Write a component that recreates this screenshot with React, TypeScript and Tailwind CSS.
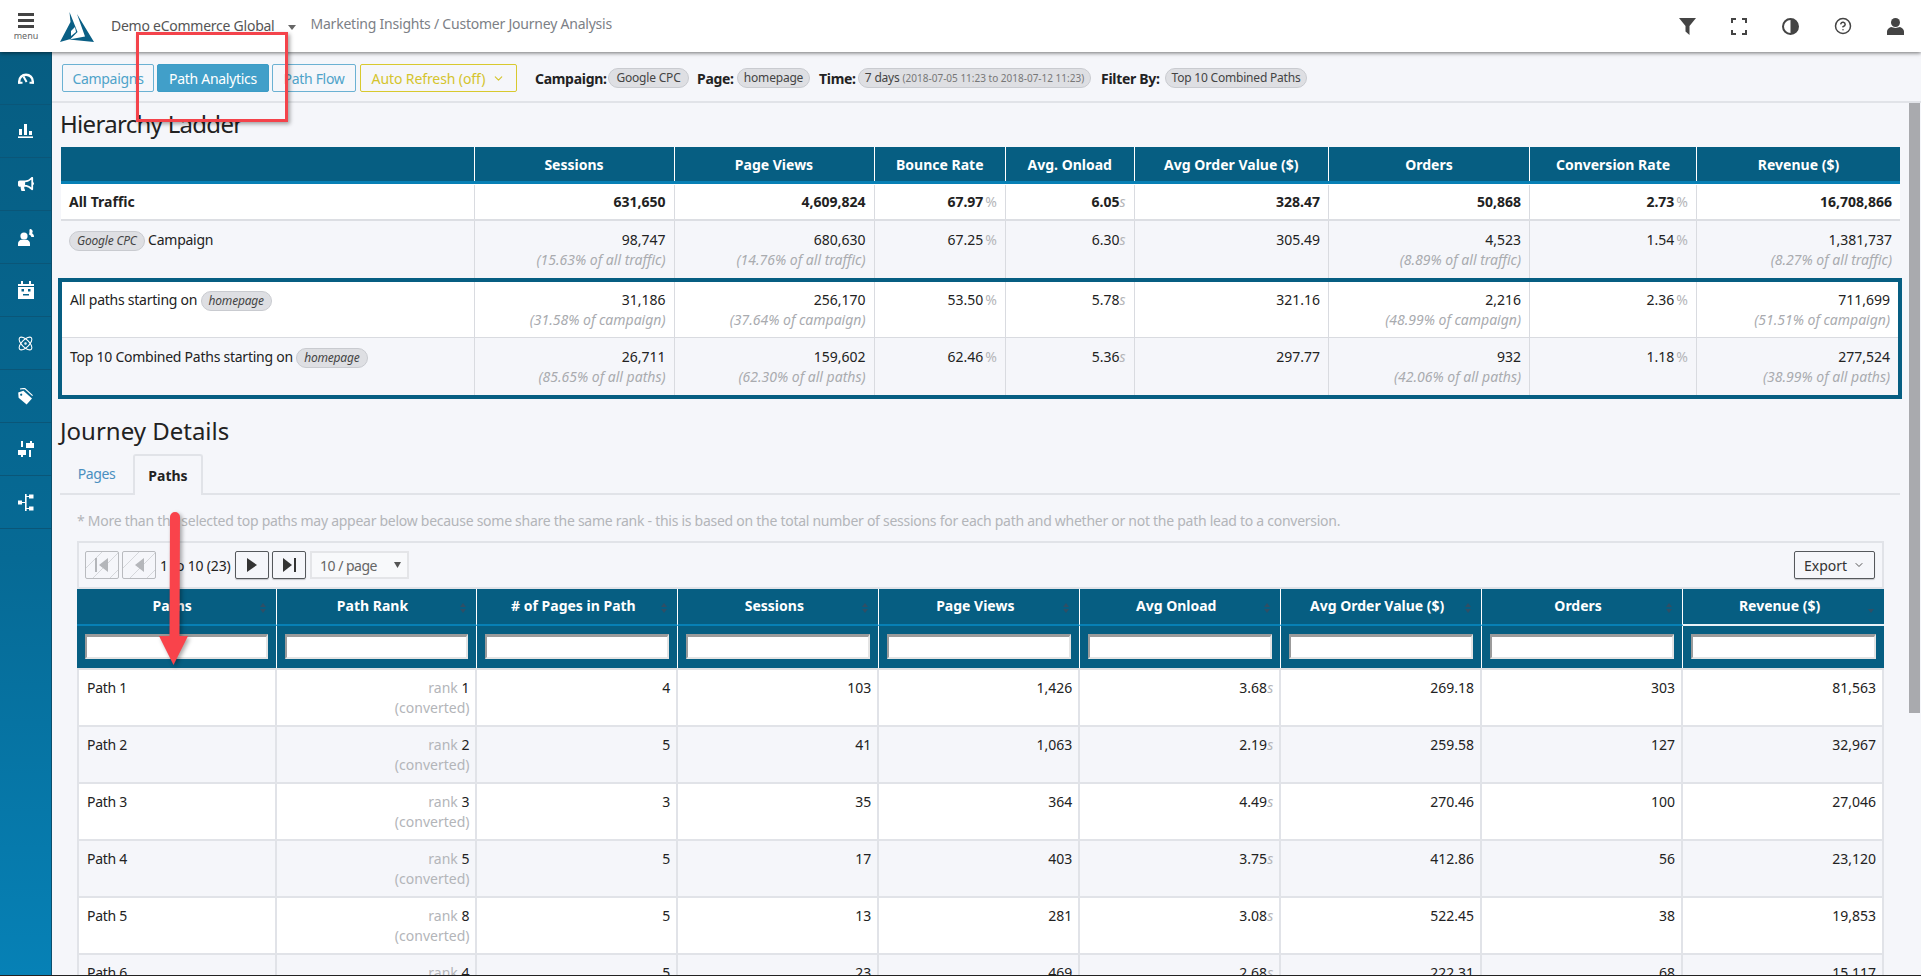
import React from 'react';
import { Atom, CircleHelp, ChevronDown } from 'lucide-react';
import { FaBullhorn } from 'react-icons/fa';

const ladderCols = 'grid grid-cols-[413.5px_200px_200px_131.5px_128.5px_194.5px_201px_167px_203px]';
const boxCols = 'grid grid-cols-[412.5px_200px_200px_131.5px_128.5px_194.5px_201px_167px_201px]';

const ladderHead = ['', 'Sessions', 'Page Views', 'Bounce Rate', 'Avg. Onload', 'Avg Order Value ($)', 'Orders', 'Conversion Rate', 'Revenue ($)'];

type Cell = { v: string; sub?: string; unit?: string };

const googleRow: Cell[] = [
  { v: '98,747', sub: '(15.63% of all traffic)' },
  { v: '680,630', sub: '(14.76% of all traffic)' },
  { v: '67.25', unit: '%' },
  { v: '6.30', unit: 's' },
  { v: '305.49' },
  { v: '4,523', sub: '(8.89% of all traffic)' },
  { v: '1.54', unit: '%' },
  { v: '1,381,737', sub: '(8.27% of all traffic)' },
];
const allRow: Cell[] = [
  { v: '631,650' },
  { v: '4,609,824' },
  { v: '67.97', unit: '%' },
  { v: '6.05', unit: 's' },
  { v: '328.47' },
  { v: '50,868' },
  { v: '2.73', unit: '%' },
  { v: '16,708,866' },
];
const pathsRow: Cell[] = [
  { v: '31,186', sub: '(31.58% of campaign)' },
  { v: '256,170', sub: '(37.64% of campaign)' },
  { v: '53.50', unit: '%' },
  { v: '5.78', unit: 's' },
  { v: '321.16' },
  { v: '2,216', sub: '(48.99% of campaign)' },
  { v: '2.36', unit: '%' },
  { v: '711,699', sub: '(51.51% of campaign)' },
];
const topRow: Cell[] = [
  { v: '26,711', sub: '(85.65% of all paths)' },
  { v: '159,602', sub: '(62.30% of all paths)' },
  { v: '62.46', unit: '%' },
  { v: '5.36', unit: 's' },
  { v: '297.77' },
  { v: '932', sub: '(42.06% of all paths)' },
  { v: '1.18', unit: '%' },
  { v: '277,524', sub: '(38.99% of all paths)' },
];

const gridHead = ['Paths', 'Path Rank', '# of Pages in Path', 'Sessions', 'Page Views', 'Avg Onload', 'Avg Order Value ($)', 'Orders', 'Revenue ($)'];
const pathRows = [
  ['Path 1', '1', '4', '103', '1,426', '3.68', '269.18', '303', '81,563'],
  ['Path 2', '2', '5', '41', '1,063', '2.19', '259.58', '127', '32,967'],
  ['Path 3', '3', '3', '35', '364', '4.49', '270.46', '100', '27,046'],
  ['Path 4', '5', '5', '17', '403', '3.75', '412.86', '56', '23,120'],
  ['Path 5', '8', '5', '13', '281', '3.08', '522.45', '38', '19,853'],
  ['Path 6', '4', '5', '23', '469', '2.68', '222.31', '68', '15,117'],
];

const Pill = ({ children, italic, className = '' }: { children: React.ReactNode; italic?: boolean; className?: string }) => (
  <span className={`inline-flex h-[20px] items-center justify-center whitespace-nowrap rounded-full border border-[#c9cbd0] bg-[#dedfe3] px-[7px] text-[12px] leading-none tracking-[-0.2px] text-[#444] ${italic ? 'italic' : ''} ${className}`}>
    {children}
  </span>
);

const GaugeIcon = () => (
  <svg width="16" height="12" viewBox="0 0 16 12" fill="none">
    <path d="M1.2 11.5V9.5a6.8 6.8 0 0 1 13.6 0v2" stroke="#fff" strokeWidth="2.4" />
    <path d="M0 10.8h4.5M11.5 10.8H16" stroke="#fff" strokeWidth="2" />
    <path d="M5.5 4.5 8.6 10" stroke="#fff" strokeWidth="2" />
  </svg>
);
const BarsIcon = () => (
  <svg width="15" height="14" viewBox="0 0 15 14" fill="#fff">
    <rect x="1" y="5" width="3" height="6" />
    <rect x="6" y="0" width="3" height="11" />
    <rect x="11" y="7" width="3" height="4" />
    <rect x="0" y="12.4" width="15" height="1.6" />
  </svg>
);
const UsersIcon = () => (
  <svg width="16" height="17" viewBox="0 0 16 17" fill="#fff">
    <circle cx="6" cy="7" r="3.6" />
    <path d="M0 17v-2.6c0-2 1.8-3.4 3.6-3.6h4.8c1.8.2 3.6 1.6 3.6 3.6V17z" />
    <path d="M12 0a2.5 2.5 0 0 1 2 4.2c1 .5 2 1.5 2 3.8h-2.6c-.5-1.4-1.4-2-2.6-2.4.6-.8.8-3 .6-4.6z" />
  </svg>
);
const CalendarIcon = () => (
  <svg width="16" height="18" viewBox="0 0 16 18" fill="#fff">
    <rect x="3" y="0" width="2" height="3" />
    <rect x="11" y="0" width="2" height="3" />
    <path fillRule="evenodd" d="M0 3h16v15H0zM3.5 8v2.5H6V8zM10 8v2.5h2.5V8zM5 13v1.5h6V13z" />
    <rect x="0" y="5" width="16" height="1" fill="#065f84" />
  </svg>
);
const TagIcon = () => (
  <svg width="15" height="17" viewBox="0 0 15 17" fill="none">
    <path fillRule="evenodd" d="M0.2 4.6 5.4 2.8 14 10.4 8.6 16.6 0.6 9.8zM3.2 5.6a1.1 1.1 0 1 0 .01 0z" fill="#fff" />
    <path d="M2 1 6.6 0.4 14.6 7.6" stroke="#fff" strokeWidth="1.2" />
  </svg>
);
const SlidersIcon = () => (
  <svg width="16" height="16" viewBox="0 0 16 16" fill="#fff">
    <rect x="3" y="0" width="2" height="6" />
    <rect x="12" y="0" width="2" height="2" />
    <rect x="8" y="2" width="8" height="5" />
    <rect x="0" y="9" width="8" height="5" />
    <rect x="3" y="14" width="2" height="2" />
    <rect x="11" y="9" width="2" height="7" />
  </svg>
);
const TreeIcon = () => (
  <svg width="16" height="17" viewBox="0 0 16 17" fill="#fff">
    <rect x="0" y="6.5" width="4" height="4" />
    <rect x="4" y="8" width="3" height="1" />
    <rect x="7" y="0" width="1.6" height="17" />
    <rect x="8" y="2" width="3" height="1" />
    <rect x="8" y="14" width="3" height="1" />
    <rect x="11" y="0.5" width="4.5" height="4" />
    <rect x="11" y="12.5" width="4.5" height="4" />
  </svg>
);

const sideIcons = [
  <GaugeIcon />,
  <BarsIcon />,
  <FaBullhorn size={16} color="#fff" />,
  <UsersIcon />,
  <CalendarIcon />,
  <Atom size={17} color="#fff" strokeWidth={1.5} />,
  <TagIcon />,
  <SlidersIcon />,
  <TreeIcon />,
];

const Value = ({ cell, bold }: { cell: Cell; bold?: boolean }) => (
  <>
    <div className={`leading-[20px] ${bold ? 'font-bold' : ''}`}>
      {cell.v}
      {cell.unit === '%' && <span className="ml-[2px] font-normal text-[#b4b5b8]">%</span>}
      {cell.unit === 's' && <span className="font-normal italic text-[#b4b5b8]">s</span>}
    </div>
    {cell.sub && <div className="whitespace-nowrap italic leading-[20px] text-[#a9abaf]">{cell.sub}</div>}
  </>
);

const LadderRow = ({ label, cells, cols, bold, className }: { label: React.ReactNode; cells: Cell[]; cols: string; bold?: boolean; className: string }) => (
  <div className={`${cols} ${className}`}>
    <div className={`border-r border-[#d9dbe0] px-[8px] leading-[20px] ${bold ? 'font-bold' : 'tracking-[-0.25px]'}`}>{label}</div>
    {cells.map((c, i) => (
      <div key={i} className={`px-[8px] text-right ${i < cells.length - 1 ? 'border-r border-[#d9dbe0]' : ''}`}>
        <Value cell={c} bold={bold} />
      </div>
    ))}
  </div>
);

const PageButton = ({ children, disabled }: { children: React.ReactNode; disabled?: boolean }) => (
  <div className={`flex h-[28px] w-[34px] items-center justify-center rounded-[2px] border ${disabled ? 'border-[#b9bbbf] bg-[repeating-linear-gradient(135deg,transparent_0,transparent_11px,#d5d7db_11px,#d5d7db_12px)]' : 'border-[#55585c] shadow-[0_1px_1px_rgba(0,0,0,.2)]'}`}>
    {children}
  </div>
);

const SortIcon = ({ downOnly }: { downOnly?: boolean }) => (
  <svg width="8" height="12" viewBox="0 0 8 12" fill="#2f4f66" className="absolute right-[9px] top-[13px]">
    {!downOnly && <path d="M4 1 7 5H1z" />}
    <path d="M4 11 7 7H1z" />
  </svg>
);

export default function App() {
  return (
    <div className="relative flex h-[976px] w-[1921px] flex-col overflow-hidden border-b border-[#222] bg-[#f5f6fa] font-['Noto_Sans',sans-serif] text-[14px] text-[#222]">
      <header className="relative z-10 flex h-[52px] shrink-0 items-center bg-white shadow-[0_1px_4px_rgba(0,0,0,.55)]">
        <div className="flex w-[52px] flex-col items-center pt-[2px]">
          <div className="flex w-[16px] flex-col gap-[3px]">
            <div className="h-[3px] bg-[#444]" />
            <div className="h-[3px] bg-[#444]" />
            <div className="h-[3px] bg-[#444]" />
          </div>
          <span className="mt-[2px] text-[9px] leading-[12px] text-[#666]">menu</span>
        </div>
        <svg width="34" height="30" viewBox="0 0 34 30" className="ml-[8px] mt-[2px]" fill="#0a5f85">
          <path d="M17 2 34 30 9 27.5 25 24.5z" />
          <path d="M9.500 0 17.500 20 10.500 27 0 30 10.500 10z" />
          <path d="M11 19 15 15 16 20 11 24z" fill="#fff" />
        </svg>
        <span className="ml-[17px] mt-[-1px] tracking-[-0.25px] text-[#555]">Demo eCommerce Global</span>
        <svg width="8" height="5" viewBox="0 0 8 5" className="ml-[14px] mt-[3px]" fill="#666">
          <path d="M0 0h8L4 5z" />
        </svg>
        <span className="ml-[14px] mt-[-6px] tracking-[-0.22px] text-[#7c7f86]">Marketing Insights / Customer Journey Analysis</span>
        <div className="ml-auto flex w-[260px] items-center justify-between pr-[17px] pl-[18px] text-[#444]">
          <svg width="17" height="17" viewBox="0 0 17 17" fill="#444"><path d="M0 0h17L10.500 8v9L6.500 13.500V8z" /></svg>
          <svg width="16" height="17" viewBox="0 0 16 17" fill="none" stroke="#444" strokeWidth="2"><path d="M1 5V1h4M11 1h4v4M15 12v4h-4M5 16H1v-4" /></svg>
          <svg width="17" height="17" viewBox="0 0 17 17"><circle cx="8.500" cy="8.500" r="7.500" fill="#fff" stroke="#444" strokeWidth="2" /><path d="M8.500 1a7.500 7.500 0 0 1 0 15z" fill="#444" /></svg>
          <CircleHelp size={18} color="#444" strokeWidth={2} />
          <svg width="17" height="17" viewBox="0 0 17 17" fill="#444"><circle cx="8.500" cy="4.500" r="4.500" /><path d="M0 17v-3.500c0-2 2-4 4-4.500l4.500 1 4.500-1c2 .5 4 2.500 4 4.500V17z" /></svg>
        </div>
      </header>

      <div className="flex min-h-0 flex-1">
        <aside className="w-[52px] shrink-0 border-r border-[#0b4f6d] bg-[linear-gradient(180deg,#065d82_0%,#066a95_55%,#0681b6_100%)]">
          {sideIcons.map((icon, i) => (
            <div key={i} className="flex h-[53px] items-center justify-center border-b border-[#0a5678]">
              {icon}
            </div>
          ))}
        </aside>

        <main className="flex min-w-0 flex-1 flex-col">
          <div className="flex h-[51px] shrink-0 items-center border-b-2 border-[#e1e3e8] pl-[10px] pt-[3px] tracking-[-0.3px]">
            <div className="flex h-[28px] w-[92px] items-center justify-center rounded-[2px] border border-[#6bb1d3] text-[#4fa3c9]">Campaigns</div>
            <div className="ml-[3px] flex h-[28px] w-[112px] items-center justify-center rounded-[2px] border border-[#3c9cc6] bg-[#419fc9] text-white">Path Analytics</div>
            <div className="ml-[3px] flex h-[28px] w-[84px] items-center justify-center rounded-[2px] border border-[#6bb1d3] text-[#4fa3c9]">Path Flow</div>
            <div className="ml-[4px] flex h-[28px] w-[157px] items-center justify-center gap-[7px] rounded-[2px] border border-[#d8c92e] tracking-[-0.1px] text-[#d4c42c]">
              Auto Refresh (off)
              <ChevronDown size={13} color="#d4c42c" />
            </div>
            <b className="ml-[18px] w-[73px] whitespace-nowrap text-[#222]">Campaign:</b>
            <Pill className="w-[81px]">Google CPC</Pill>
            <b className="ml-[8px] w-[40px]">Page:</b>
            <Pill className="w-[73px]">homepage</Pill>
            <b className="ml-[9px] w-[39px]">Time:</b>
            <Pill className="w-[233px]">
              7 days<span className="ml-[3px] text-[10px] tracking-[0px] text-[#777]">(2018-07-05 11:23 to 2018-07-12 11:23)</span>
            </Pill>
            <b className="ml-[10px] w-[64px] whitespace-nowrap">Filter By:</b>
            <Pill className="w-[142px]">Top 10 Combined Paths</Pill>
          </div>

          <div className="flex min-h-0 flex-1">
            <div className="min-w-0 flex-1 pl-[8px]">
              <h2 className="mt-[-1px] flex h-[44px] items-center text-[24px] leading-none tracking-[-0.7px]">Hierarchy Ladder</h2>

              <div className="ml-px mt-px w-[1839px]">
                <div className={`${ladderCols} h-[37px] border-b-[3px] border-[#0780b5] bg-[#065e82] font-bold text-white`}>
                  {ladderHead.map((h, i) => (
                    <div key={i} className={`flex items-center justify-center ${i < 8 ? 'border-r border-white' : ''}`}>{h}</div>
                  ))}
                </div>
                <LadderRow label="All Traffic" cells={allRow} cols={ladderCols} bold className="h-[37px] items-stretch border-b-2 border-[#dcdee3] bg-white pt-[1px] [&>div]:flex [&>div]:items-center [&>div]:justify-end [&>div:first-child]:justify-start" />
                <LadderRow
                  label={<><Pill italic>Google CPC</Pill> Campaign</>}
                  cells={googleRow}
                  cols={ladderCols}
                  className="h-[57px] [&>div]:pt-[9px]"
                />
                <div className="-ml-[3px] -mr-[2px] border-[4px] border-[#065e82]">
                  <LadderRow
                    label={<>All paths starting on <Pill italic>homepage</Pill></>}
                    cells={pathsRow}
                    cols={boxCols}
                    className="h-[56px] border-b border-[#d9dbe0] bg-white [&>div]:pt-[8px]"
                  />
                  <LadderRow
                    label={<>Top 10 Combined Paths starting on <Pill italic>homepage</Pill></>}
                    cells={topRow}
                    cols={boxCols}
                    className="h-[57px] [&>div]:pt-[9px]"
                  />
                </div>
              </div>

              <h2 className="mt-[15px] flex h-[34px] items-center text-[24px] leading-none">Journey Details</h2>
              <div className="mt-[6px] flex h-[41px] w-[1840px] items-end border-b-2 border-[#e1e3e8]">
                <div className="flex h-[39px] w-[73px] items-center justify-center tracking-[-0.4px] text-[#4a8fc0]">Pages</div>
                <div className="mb-[-2px] flex h-[41px] w-[70px] items-center justify-center rounded-t-[3px] border-2 border-b-0 border-[#e1e3e8] bg-[#f5f6fa] font-bold">Paths</div>
              </div>

              <p className="ml-[17px] mt-[16px] h-[20px] leading-[20px] tracking-[-0.27px] text-[#b3b5b9]">
                * More than the selected top paths may appear below because some share the same rank - this is based on the total number of sessions for each path and whether or not the path lead to a conversion.
              </p>

              <div className="ml-[17px] mt-[10px] w-[1807px] border-x-2 border-t-2 border-[#e1e3e8]">
                <div className="flex h-[44px] items-center pl-[6px] pr-[7px]">
                  <PageButton disabled>
                    <svg width="14" height="14" viewBox="0 0 14 14" fill="#b4b6ba"><rect x="0" y="0" width="2" height="14" /><path d="M13 0v14L4 7z" /></svg>
                  </PageButton>
                  <div className="ml-[3px]">
                    <PageButton disabled>
                      <svg width="10" height="14" viewBox="0 0 10 14" fill="#b4b6ba"><path d="M10 0v14L1 7z" /></svg>
                    </PageButton>
                  </div>
                  <span className="ml-[4px] w-[75px] whitespace-nowrap tracking-[-0.2px]">1 to 10 (23)</span>
                  <PageButton>
                    <svg width="10" height="14" viewBox="0 0 10 14" fill="#333"><path d="M0 0v14L10 7z" /></svg>
                  </PageButton>
                  <div className="ml-[3px]">
                    <PageButton>
                      <svg width="13" height="14" viewBox="0 0 13 14" fill="#333"><path d="M0 0v14L9 7z" /><rect x="11" y="0" width="2" height="14" /></svg>
                    </PageButton>
                  </div>
                  <div className="ml-[4px] flex h-[28px] w-[99px] items-center justify-between border-2 border-[#e4e5e8] bg-[#f8f9fb] pl-[8px] pr-[6px] tracking-[-0.5px] text-[#666]">
                    10 / page
                    <svg width="7" height="6" viewBox="0 0 7 6" fill="#555"><path d="M0 0h7L3.500 6z" /></svg>
                  </div>
                  <div className="ml-auto flex h-[28px] w-[81px] items-center justify-center gap-[6px] rounded-[2px] border border-[#55585c] text-[#333] shadow-[0_1px_1px_rgba(0,0,0,.2)]">
                    Export
                    <ChevronDown size={12} color="#555" />
                  </div>
                </div>

                <div className="-mx-[2px] grid grid-cols-[199.5px_repeat(8,1fr)] border-t-2 border-[#e1e3e8] bg-[#065e82] font-bold text-white">
                  {gridHead.map((h, i) => (
                    <div key={i} className={`relative flex h-[37px] items-center justify-center border-b-2 pb-[2px] pr-[8px] ${i === 8 ? 'border-[#e9f2f7]' : 'border-[#0780b5] border-r border-r-white'}`}>
                      {h}
                      <SortIcon downOnly={i === 8} />
                    </div>
                  ))}
                  {gridHead.map((h, i) => (
                    <div key={h} className={`flex h-[42px] items-start pl-[8px] pr-[8px] pt-[8px] ${i < 8 ? 'border-r border-white' : ''}`}>
                      <input className="h-[25px] w-full border-2 border-t-[3px] border-[#9b9b9b] border-r-[#e4e4e4] border-b-[#e4e4e4] bg-white" />
                    </div>
                  ))}
                </div>

                <div className="-mx-[2px] border-t-2 border-[#dfe0e3]">
                  {pathRows.map((row, r) => (
                    <div key={r} className={`grid h-[57px] grid-cols-[197.5px_repeat(8,1fr)] border-b-2 border-l-2 border-[#e1e3e8] ${r % 2 ? 'bg-[#f5f6fa]' : 'bg-white'}`}>
                      {row.map((val, c) => (
                        <div key={c} className={`border-r-2 border-[#e1e3e8] pl-[8px] pr-[6px] pt-[8px] leading-[20px] ${c === 0 ? 'pl-[7px] text-left tracking-[-0.3px]' : 'text-right'}`}>
                          {c === 1 ? (
                            <>
                              <span className="text-[#b3b5b9]">rank </span>{val}
                              <div className="text-[#b3b5b9]">(converted)</div>
                            </>
                          ) : c === 5 ? (
                            <>{val}<span className="italic text-[#b4b5b8]">s</span></>
                          ) : val}
                        </div>
                      ))}
                    </div>
                  ))}
                </div>
              </div>
            </div>

            <div className="w-[12px] shrink-0 self-start">
              <div className="mr-px h-[610px] bg-[#a9aaae]" />
            </div>
          </div>
        </main>
      </div>

      {/* annotation overlays from the screenshot */}
      <div className="absolute left-[136px] top-[32px] z-20 h-[90px] w-[152px] border-[3px] border-[#f4434b] shadow-[2px_2px_4px_rgba(0,0,0,.35)]" />
      <svg width="40" height="166" viewBox="0 0 40 166" className="absolute left-[155px] top-[510px] z-20 drop-shadow-[2px_2px_2px_rgba(0,0,0,.35)]">
        <path d="M15 7a5 5 0 0 1 10 0L24.500 126H33L18.500 155 4 126H14.500z" fill="#f9434b" />
      </svg>
    </div>
  );
}
